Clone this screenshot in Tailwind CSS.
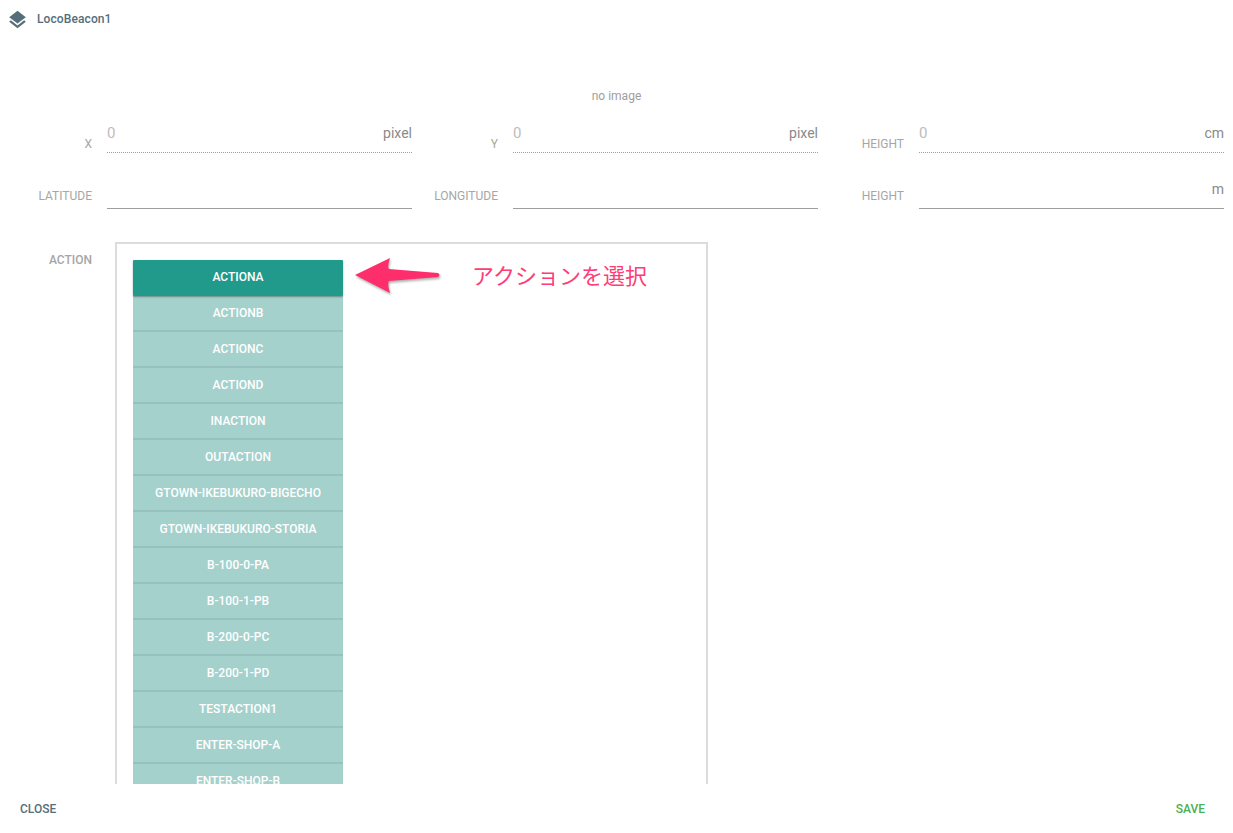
<!DOCTYPE html>
<html lang="en">
<head>
  <meta charset="UTF-8">
  <title>LocoBeacon1</title>
  <script src="https://cdn.jsdelivr.net/npm/@tailwindcss/browser@4"></script>
</head>
<body class="bg-white font-['Roboto',sans-serif] h-[833px] w-[1233px] overflow-hidden relative">

  <!-- title -->
  <header class="h-[38px] flex items-center pl-[8px] gap-[10px]">
    <svg class="w-[19px] h-[19px] shrink-0" viewBox="0 0 24 24" fill="#546e7a">
      <path d="M12 1 1.5 9 12 17l10.5-8L12 1z"/>
      <path d="M12 19.5 3.6 13 1.5 14.7 12 23l10.5-8.3-2.1-1.7L12 19.5z"/>
    </svg>
    <span class="text-[12px] font-medium text-[#546e7a] tracking-[0.1px]">LocoBeacon1</span>
  </header>

  <div class="h-[746px] overflow-hidden">
    <p class="text-center text-[12px] leading-[16px] text-[#9e9e9e] mt-[50px]">no image</p>

    <!-- position fields -->
    <div class="grid grid-cols-[406px_406px_406px] pl-[6px] mt-[17px] gap-y-[24px]">
      <div class="flex items-end">
        <label class="w-[86px] text-right text-[12px] leading-[16px] text-[#a6a6a6] mb-[1px]">X</label>
        <div class="ml-[15px] w-[305px] h-[32px] border-b border-dotted border-[#9e9e9e] flex justify-between text-[15px] leading-[24px]">
          <span class="text-[#bdbdbd]">0</span><span class="text-[#8a8a8a] text-[14px]">pixel</span>
        </div>
      </div>
      <div class="flex items-end">
        <label class="w-[86px] text-right text-[12px] leading-[16px] text-[#a6a6a6] mb-[1px]">Y</label>
        <div class="ml-[15px] w-[305px] h-[32px] border-b border-dotted border-[#9e9e9e] flex justify-between text-[15px] leading-[24px]">
          <span class="text-[#bdbdbd]">0</span><span class="text-[#8a8a8a] text-[14px]">pixel</span>
        </div>
      </div>
      <div class="flex items-end">
        <label class="w-[86px] text-right text-[12px] leading-[16px] text-[#a6a6a6] mb-[1px]">HEIGHT</label>
        <div class="ml-[15px] w-[305px] h-[32px] border-b border-dotted border-[#9e9e9e] flex justify-between text-[15px] leading-[24px]">
          <span class="text-[#bdbdbd]">0</span><span class="text-[#8a8a8a] text-[14px]">cm</span>
        </div>
      </div>

      <div class="flex items-end">
        <label class="w-[86px] text-right text-[12px] leading-[16px] text-[#a6a6a6] mb-[5px]">LATITUDE</label>
        <div class="ml-[15px] w-[305px] h-[32px] border-b border-[#9e9e9e]"></div>
      </div>
      <div class="flex items-end">
        <label class="w-[86px] text-right text-[12px] leading-[16px] text-[#a6a6a6] mb-[5px]">LONGITUDE</label>
        <div class="ml-[15px] w-[305px] h-[32px] border-b border-[#9e9e9e]"></div>
      </div>
      <div class="flex items-end">
        <label class="w-[86px] text-right text-[12px] leading-[16px] text-[#a6a6a6] mb-[5px]">HEIGHT</label>
        <div class="ml-[15px] w-[305px] h-[32px] border-b border-[#9e9e9e] flex justify-end text-[14px] leading-[24px] text-[#8a8a8a]">m</div>
      </div>
    </div>

    <!-- action list -->
    <div class="flex pl-[6px] mt-[33px]">
      <label class="w-[86px] text-right text-[12px] leading-[16px] font-medium text-[#a6a6a6] mt-[10px]">ACTION</label>
      <div class="ml-[23px] w-[593px] border-2 border-[#dcdcdc] p-[16px] h-[700px]">
        <ul class="w-[210px] text-[12px] font-medium text-white text-center">
          <li class="h-[36px] leading-[34px] bg-[#219a8b] rounded-[1px] shadow-[0_1px_2px_rgba(0,0,0,0.35)] relative">ACTIONA</li>
          <li class="h-[36px] leading-[34px] bg-[#a4d1cc] border-b-2 border-[#97c1bc]">ACTIONB</li>
          <li class="h-[36px] leading-[34px] bg-[#a4d1cc] border-b-2 border-[#97c1bc]">ACTIONC</li>
          <li class="h-[36px] leading-[34px] bg-[#a4d1cc] border-b-2 border-[#97c1bc]">ACTIOND</li>
          <li class="h-[36px] leading-[34px] bg-[#a4d1cc] border-b-2 border-[#97c1bc]">INACTION</li>
          <li class="h-[36px] leading-[34px] bg-[#a4d1cc] border-b-2 border-[#97c1bc]">OUTACTION</li>
          <li class="h-[36px] leading-[34px] bg-[#a4d1cc] border-b-2 border-[#97c1bc]">GTOWN-IKEBUKURO-BIGECHO</li>
          <li class="h-[36px] leading-[34px] bg-[#a4d1cc] border-b-2 border-[#97c1bc]">GTOWN-IKEBUKURO-STORIA</li>
          <li class="h-[36px] leading-[34px] bg-[#a4d1cc] border-b-2 border-[#97c1bc]">B-100-0-PA</li>
          <li class="h-[36px] leading-[34px] bg-[#a4d1cc] border-b-2 border-[#97c1bc]">B-100-1-PB</li>
          <li class="h-[36px] leading-[34px] bg-[#a4d1cc] border-b-2 border-[#97c1bc]">B-200-0-PC</li>
          <li class="h-[36px] leading-[34px] bg-[#a4d1cc] border-b-2 border-[#97c1bc]">B-200-1-PD</li>
          <li class="h-[36px] leading-[34px] bg-[#a4d1cc] border-b-2 border-[#97c1bc]">TESTACTION1</li>
          <li class="h-[36px] leading-[34px] bg-[#a4d1cc] border-b-2 border-[#97c1bc]">ENTER-SHOP-A</li>
          <li class="h-[36px] leading-[34px] bg-[#a4d1cc] border-b-2 border-[#97c1bc]">ENTER-SHOP-B</li>
        </ul>
      </div>
    </div>
  </div>

  <!-- footer -->
  <footer class="h-[49px] flex items-center justify-between pl-[20px] pr-[28px] text-[12px] font-medium">
    <span class="text-[#546e7a]">CLOSE</span>
    <span class="text-[#4caf50]">SAVE</span>
  </footer>

  <!-- annotation over the list -->
  <svg class="absolute left-[352px] top-[254px] w-[92px] h-[44px] drop-shadow-[1px_2px_1px_rgba(0,0,0,0.3)]" viewBox="0 0 92 44">
    <path d="M3 21 L38 4 Q35 13 37 15 L86 19 Q89 21 86 23 L37 27 Q35 30 38 39 Z" fill="#fe2d6c"/>
  </svg>
  <span class="absolute left-[472px] top-[260px] text-[22px] leading-[28px] text-[#fe3d77] font-['Noto_Sans_CJK_JP',sans-serif]">アクションを選択</span>
</body>
</html>
